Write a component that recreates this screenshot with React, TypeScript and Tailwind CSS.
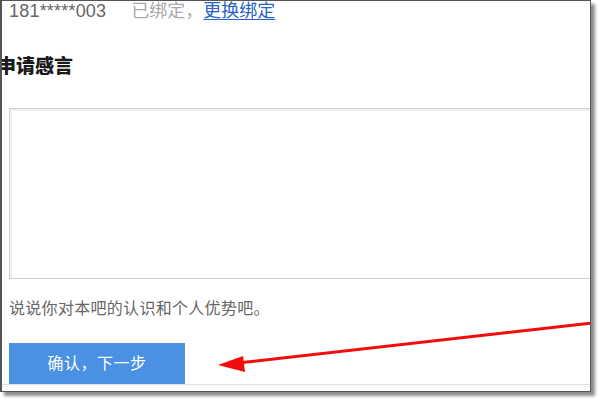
export default function App() {
  return (
    <div className="w-[600px] h-[404px] bg-white overflow-hidden font-['Liberation_Sans','Noto_Sans_CJK_SC',sans-serif]">
      {/* Framed screenshot */}
      <div className="relative w-[591px] h-[392px] bg-white border-l-2 border-t border-r border-b border-[#555] shadow-[4px_4px_3px_rgba(0,0,0,0.45)] overflow-hidden flex flex-col">
        <div className="flex flex-col pl-[7px] flex-1">
          {/* Phone row */}
          <div className="flex items-center h-5 text-[18px] leading-5 whitespace-nowrap">
            <span className="text-[#666] tracking-[0.2px]">181*****003</span>
            <span className="ml-[25px] text-[#aaa]">已绑定，</span>
            <a href="#" className="text-[#2a63c4] underline underline-offset-2">更换绑定</a>
          </div>

          {/* Heading */}
          <h2 className="mt-[34px] -ml-[12px] text-[19px] leading-6 font-black text-[#1a1a1a] whitespace-nowrap">申请感言</h2>

          {/* Textarea */}
          <div className="mt-[29px] w-[640px] h-[171px] border border-[#d0d0d0] shadow-[inset_2px_2px_0_#f0f0f0] bg-white" />

          {/* Hint */}
          <p className="mt-[20px] text-[16px] leading-5 text-[#666] tracking-[0.3px] whitespace-nowrap">说说你对本吧的认识和个人优势吧。</p>

          {/* Button */}
          <button className="mt-[24px] w-[176px] h-[41px] bg-[#4a91e3] text-white text-[16px] tracking-[0.5px]">
            确认，下一步
          </button>
        </div>
        <div className="h-px bg-[#e2e2e2]" />
        <div className="h-[6px] bg-[#fbfbfb]" />

        {/* Red annotation arrow */}
        <svg className="absolute left-0 top-0 pointer-events-none" width="600" height="404" viewBox="0 0 600 404">
          <line x1="236" y1="362" x2="600" y2="321" stroke="#f20c0c" strokeWidth="3" strokeLinecap="round" />
          <polygon points="216,364 241,355 243,371" fill="#f20c0c" />
        </svg>
      </div>
    </div>
  )
}
